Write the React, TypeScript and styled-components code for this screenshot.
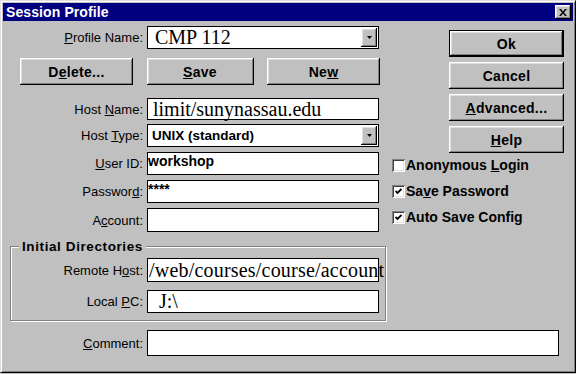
import React from "react";
import styled, { createGlobalStyle, css } from "styled-components";

const GlobalStyle = createGlobalStyle`
  html, body {
    margin: 0;
    padding: 0;
  }
  body {
    width: 576px;
    height: 374px;
    overflow: hidden;
    background: #c0c0c0;
    font-family: "Liberation Sans", Arial, sans-serif;
    color: #000;
  }
`;

const raised = css`
  background: #c0c0c0;
  box-shadow: inset -1px -1px #000, inset 1px 1px #fff, inset -2px -2px #808080,
    inset 2px 2px #dfdfdf;
`;

const Window = styled.div`
  box-sizing: border-box;
  width: 576px;
  height: 373px;
  display: flex;
  flex-direction: column;
  padding: 2px;
  background: #c0c0c0;
  border: 1px solid;
  border-color: #dfdfdf #000 #000 #dfdfdf;
  box-shadow: inset 1px 1px #fff, inset -1px -1px #808080;
`;

const TitleBar = styled.div`
  height: 18px;
  flex: none;
  display: flex;
  align-items: center;
  justify-content: space-between;
  padding: 0 2px 0 3px;
  background: #000080;
  color: #fff;
  font-size: 14px;
  font-weight: bold;
  letter-spacing: 0.1px;
`;

const CloseButton = styled.div`
  ${raised}
  width: 16px;
  height: 14px;
  display: flex;
  align-items: center;
  justify-content: center;
`;

const Body = styled.div`
  flex: 1;
  display: flex;
  flex-direction: column;
  padding: 5px 9px 0 7px;
`;

const Top = styled.div`
  display: flex;
  gap: 5px;
`;

const LeftCol = styled.div`
  width: 377px;
  display: flex;
  flex-direction: column;
`;

const RightCol = styled.div`
  flex: 1;
  display: flex;
  flex-direction: column;
  align-items: flex-end;
  gap: 5px;
  padding-top: 4px;
`;

const FormRow = styled.div<{ $label?: number; $top?: number }>`
  display: grid;
  grid-template-columns: ${({ $label }) => $label ?? 133}px auto;
  column-gap: 4px;
  align-items: center;
  margin-top: ${({ $top }) => $top ?? 0}px;
`;

const Label = styled.label`
  font-size: 13px;
  text-align: right;
  white-space: nowrap;
`;

const Key = styled.span`
  text-decoration: underline;
  text-underline-offset: 1px;
`;

const Field = styled.div<{ $w?: number; $h?: number; $pad?: number; $top?: boolean }>`
  box-sizing: border-box;
  width: ${({ $w }) => $w ?? 232}px;
  height: ${({ $h }) => $h ?? 23}px;
  background: #fff;
  border: 1px solid #000;
  padding-left: ${({ $pad }) => $pad ?? 4}px;
  display: flex;
  align-items: ${({ $top }) => ($top ? "flex-start" : "center")};
  white-space: nowrap;
  overflow: visible;
`;

const Combo = styled(Field)`
  padding-top: 1px;
  padding-right: 1px;
  padding-bottom: 1px;
  justify-content: space-between;
`;

const DropButton = styled.div`
  ${raised}
  width: 16px;
  align-self: stretch;
  display: flex;
  align-items: center;
  justify-content: center;
`;

const SerifValue = styled.span<{ $spacing?: number }>`
  font-family: "Liberation Serif", "Times New Roman", serif;
  font-size: 20px;
  letter-spacing: ${({ $spacing }) => $spacing ?? 0}px;
`;

const BoldValue = styled.span<{ $size?: number }>`
  font-size: ${({ $size }) => $size ?? 14}px;
  font-weight: bold;
  line-height: 16px;
`;

const PushButton = styled.button<{ $w?: number; $default?: boolean }>`
  ${raised}
  box-sizing: border-box;
  width: ${({ $w }) => $w ?? 115}px;
  height: 27px;
  flex: none;
  border: none;
  margin: 0;
  padding: 0;
  font-family: inherit;
  font-size: 14px;
  font-weight: bold;
  letter-spacing: 0.3px;
  color: #000;
  ${({ $default }) =>
    $default &&
    css`
      border: 1px solid #000;
    `}
`;

const ButtonRow = styled.div`
  display: flex;
  justify-content: space-between;
  margin: 9px 7px 0 10px;
`;

const GroupBox = styled.div`
  box-sizing: border-box;
  width: 376px;
  margin-top: 14px;
  padding-bottom: 7px;
  border: 1px solid #808080;
  box-shadow: inset 1px 1px #fff, 1px 1px #fff;
`;

const GroupTitle = styled.div`
  width: fit-content;
  margin: -8px 0 0 8px;
  padding: 0 3px;
  background: #c0c0c0;
  font-size: 13.5px;
  font-weight: bold;
  letter-spacing: 0.6px;
  line-height: 16px;
`;

const CheckList = styled.div`
  align-self: flex-start;
  display: flex;
  flex-direction: column;
  gap: 12px;
`;

const CheckRow = styled.label`
  display: flex;
  align-items: center;
  gap: 1px;
  height: 14px;
  font-size: 14px;
  font-weight: bold;
  white-space: nowrap;
`;

const CheckBox = styled.span`
  box-sizing: border-box;
  width: 13px;
  height: 13px;
  display: flex;
  align-items: center;
  justify-content: center;
  background: #fff;
  box-shadow: inset 1px 1px #808080, inset -1px -1px #fff, inset 2px 2px #404040,
    inset -2px -2px #dfdfdf;
`;

const CloseIcon = () => (
  <svg width="8" height="7" viewBox="0 0 8 7">
    <path d="M0 0h2l2 2.5L6 0h2L5 3.5 8 7H6L4 4.5 2 7H0l3-3.5z" fill="#000" />
  </svg>
);

const ArrowIcon = () => (
  <svg width="5" height="3" viewBox="0 0 5 3">
    <polygon points="0,0 5,0 2.5,3" fill="#000" />
  </svg>
);

const CheckIcon = () => (
  <svg width="7" height="7" viewBox="0 0 7 7">
    <path d="M0.5 3 L2.5 5 L6.5 1" stroke="#000" strokeWidth="1.8" fill="none" />
  </svg>
);

const Check = ({ checked, children }: { checked?: boolean; children: React.ReactNode }) => (
  <CheckRow>
    <CheckBox>{checked && <CheckIcon />}</CheckBox>
    <span>{children}</span>
  </CheckRow>
);

const App = () => {
  return (
    <>
      <GlobalStyle />
      <Window>
        <TitleBar>
          <span>Session Profile</span>
          <CloseButton>
            <CloseIcon />
          </CloseButton>
        </TitleBar>
        <Body>
          <Top>
            <LeftCol>
              <FormRow>
                <Label>
                  <Key>P</Key>rofile Name:
                </Label>
                <Combo $pad={7}>
                  <SerifValue>CMP 112</SerifValue>
                  <DropButton>
                    <ArrowIcon />
                  </DropButton>
                </Combo>
              </FormRow>

              <ButtonRow>
                <PushButton $w={113}>
                  D<Key>e</Key>lete...
                </PushButton>
                <PushButton $w={107}>
                  <Key>S</Key>ave
                </PushButton>
                <PushButton $w={113}>
                  Ne<Key>w</Key>
                </PushButton>
              </ButtonRow>

              <FormRow $top={13}>
                <Label>
                  Host <Key>N</Key>ame:
                </Label>
                <Field $h={22} $pad={5}>
                  <SerifValue>limit/sunynassau.edu</SerifValue>
                </Field>
              </FormRow>
              <FormRow $top={4}>
                <Label>
                  Host <Key>T</Key>ype:
                </Label>
                <Combo $pad={4}>
                  <BoldValue $size={13.5}>UNIX (standard)</BoldValue>
                  <DropButton>
                    <ArrowIcon />
                  </DropButton>
                </Combo>
              </FormRow>
              <FormRow $top={5}>
                <Label>
                  <Key>U</Key>ser ID:
                </Label>
                <Field $pad={0} $top>
                  <BoldValue>workshop</BoldValue>
                </Field>
              </FormRow>
              <FormRow $top={5}>
                <Label>
                  Passwor<Key>d</Key>:
                </Label>
                <Field $pad={0} $top>
                  <BoldValue>****</BoldValue>
                </Field>
              </FormRow>
              <FormRow $top={5}>
                <Label>
                  A<Key>c</Key>count:
                </Label>
                <Field $h={24} />
              </FormRow>

              <GroupBox>
                <GroupTitle>Initial Directories</GroupTitle>
                <FormRow $label={132} $top={3}>
                  <Label>
                    Remote H<Key>o</Key>st:
                  </Label>
                  <Field $h={24} $pad={1}>
                    <SerifValue $spacing={0.2}>/web/courses/course/account</SerifValue>
                  </Field>
                </FormRow>
                <FormRow $label={132} $top={8}>
                  <Label>
                    Local <Key>P</Key>C:
                  </Label>
                  <Field $pad={11}>
                    <SerifValue>J:\</SerifValue>
                  </Field>
                </FormRow>
              </GroupBox>
            </LeftCol>

            <RightCol>
              <PushButton $default>Ok</PushButton>
              <PushButton>Cancel</PushButton>
              <PushButton>
                <Key>A</Key>dvanced...
              </PushButton>
              <PushButton>
                <Key>H</Key>elp
              </PushButton>
              <CheckList>
                <Check>
                  Anonymous <Key>L</Key>ogin
                </Check>
                <Check checked>
                  Sa<Key>v</Key>e Password
                </Check>
                <Check checked>Auto Save Config</Check>
              </CheckList>
            </RightCol>
          </Top>

          <FormRow $top={9}>
            <Label>
              <Key>C</Key>omment:
            </Label>
            <Field $w={412} $h={26} />
          </FormRow>
        </Body>
      </Window>
    </>
  );
};

export default App;
